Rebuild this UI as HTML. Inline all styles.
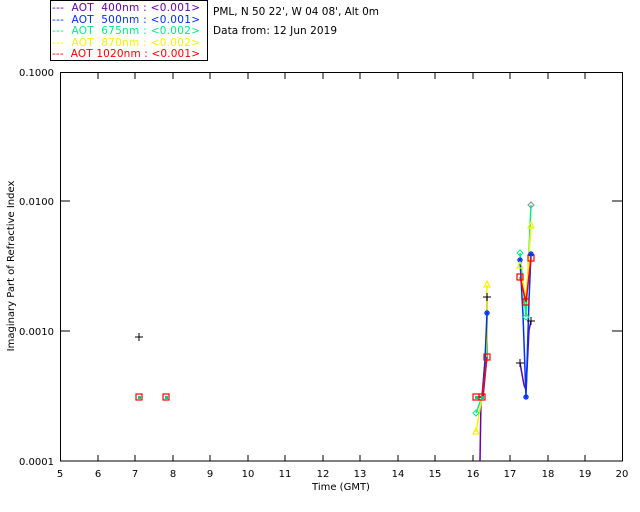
<!DOCTYPE html>
<html><head><style>
body{margin:0;background:#fff;}
svg{display:block;font-family:"DejaVu Sans","Liberation Sans",sans-serif;}
.l{white-space:pre;}
</style></head><body>
<svg width="640" height="512" viewBox="0 0 640 512" xmlns="http://www.w3.org/2000/svg">
<rect x="50.5" y="0.5" width="157" height="60" fill="#fff" stroke="#000"/>
<g font-size="10.5" class="l">
<text x="52" y="11" fill="#6a00a8" textLength="148" lengthAdjust="spacing" xml:space="preserve">---  AOT  400nm : &lt;0.001&gt;</text>
<text x="52" y="23" fill="#0030ff" textLength="148" lengthAdjust="spacing" xml:space="preserve">---  AOT  500nm : &lt;0.001&gt;</text>
<text x="52" y="34" fill="#00ee80" textLength="148" lengthAdjust="spacing" xml:space="preserve">---  AOT  675nm : &lt;0.002&gt;</text>
<text x="52" y="46" fill="#f4f400" textLength="148" lengthAdjust="spacing" xml:space="preserve">---  AOT  870nm : &lt;0.002&gt;</text>
<text x="52" y="57" fill="#ff0000" textLength="148" lengthAdjust="spacing" xml:space="preserve">---  AOT 1020nm : &lt;0.001&gt;</text>
<text x="213" y="15" fill="#000" textLength="166" lengthAdjust="spacing">PML, N 50 22', W 04 08', Alt 0m</text>
<text x="213" y="34" fill="#000" textLength="124" lengthAdjust="spacing">Data from: 12 Jun 2019</text>
</g>
<g stroke="#000" fill="none">
<rect x="60.5" y="72.5" width="562" height="388.5"/>
<path d="M98 461v-6M135 461v-6M173 461v-6M210 461v-6M248 461v-6M285 461v-6M323 461v-6M360 461v-6M398 461v-6M435 461v-6M473 461v-6M510 461v-6M548 461v-6M585 461v-6
M98 73v6M135 73v6M173 73v6M210 73v6M248 73v6M285 73v6M323 73v6M360 73v6M398 73v6M435 73v6M473 73v6M510 73v6M548 73v6M585 73v6
M60 201h10M60 331h10M622 201h-10M622 331h-10"/>
</g>
<g font-size="10" fill="#000">
<text x="54" y="76" text-anchor="end">0.1000</text>
<text x="54" y="205" text-anchor="end">0.0100</text>
<text x="54" y="335" text-anchor="end">0.0010</text>
<text x="54" y="465" text-anchor="end">0.0001</text>
<g text-anchor="middle">
<text x="60" y="477">5</text><text x="98" y="477">6</text><text x="135" y="477">7</text><text x="173" y="477">8</text><text x="210" y="477">9</text><text x="248" y="477">10</text><text x="285" y="477">11</text><text x="323" y="477">12</text><text x="360" y="477">13</text><text x="398" y="477">14</text><text x="435" y="477">15</text><text x="473" y="477">16</text><text x="510" y="477">17</text><text x="548" y="477">18</text><text x="585" y="477">19</text><text x="622" y="477">20</text>
<text x="341" y="490">Time (GMT)</text>
<text transform="translate(14,266) rotate(-90)">Imaginary Part of Refractive Index</text>
</g></g>
<g fill="none" stroke-width="1.5">
<polyline stroke="#6a00a8" points="480,461 481,400 483,397 487,357 487,297"/>
<polyline stroke="#6a00a8" points="520,363 524,385 526,390 529,330 531,321"/>
<polyline stroke="#00ee80" points="476,413 482,397 487,357 487,313"/>
<polyline stroke="#f4f400" points="476,432 482,397 487,340 487,285"/>
<polyline stroke="#0030ff" points="476,397 482,397 485,360 487,313"/>
<polyline stroke="#00ee80" points="520,253 526,317 531,205"/>
<polyline stroke="#f4f400" points="520,265 526,300 531,226"/>
<polyline stroke="#0030ff" points="520,260 523,315 526,397 529,300 531,254"/>
<polyline stroke="#ff0000" points="520,277 526,302 531,258"/>
<polyline stroke="#ff0000" points="476,397 482,397 487,357"/>
</g>
<g fill="none" stroke="#ff0000" stroke-width="1.2">
<rect x="136" y="394" width="6" height="6"/><rect x="163" y="394" width="6" height="6"/>
<rect x="473" y="394" width="6" height="6"/><rect x="479" y="394" width="6" height="6"/>
<rect x="484" y="354" width="6" height="6"/>
<rect x="517" y="274" width="6" height="6"/><rect x="523" y="299" width="6" height="6"/><rect x="528" y="255" width="6" height="6"/>
</g>
<g fill="#00cc88"><rect x="138" y="396" width="3" height="3"/><rect x="165" y="396" width="3" height="3"/><rect x="475" y="396" width="3" height="3"/><rect x="481" y="396" width="3" height="3"/></g>
<g stroke="#000" stroke-width="1">
<path d="M135 337h8M139 333v8M483 297h8M487 293v8M516 363h8M520 359v8M527 321h8M531 317v8"/>
</g>
<g stroke="#0030ff" stroke-width="1.2">
<path d="M484 313h6M487 310v6M485 311l4 4M489 311l-4 4M523 397h6M526 394v6M524 395l4 4M528 395l-4 4M528 254h6M531 251v6M529 252l4 4M533 252l-4 4M517 260h6M520 257v6M518 258l4 4M522 258l-4 4"/>
</g>
<g fill="none" stroke="#f4f400" stroke-width="1.2">
<path d="M487 281l3 6h-6z M476 428l3 6h-6z M531 222l3 6h-6z M520 262l3 6h-6z"/>
</g>
<g fill="none" stroke="#00ee80" stroke-width="1">
<path d="M531 202l3 3-3 3-3-3z M476 410l3 3-3 3-3-3z M520 250l3 3-3 3-3-3z M526 314l3 3-3 3-3-3z"/>
</g>
<path d="M531 202l3 3-3 3-3-3z" fill="none" stroke="#999"/>
</svg>
</body></html>
